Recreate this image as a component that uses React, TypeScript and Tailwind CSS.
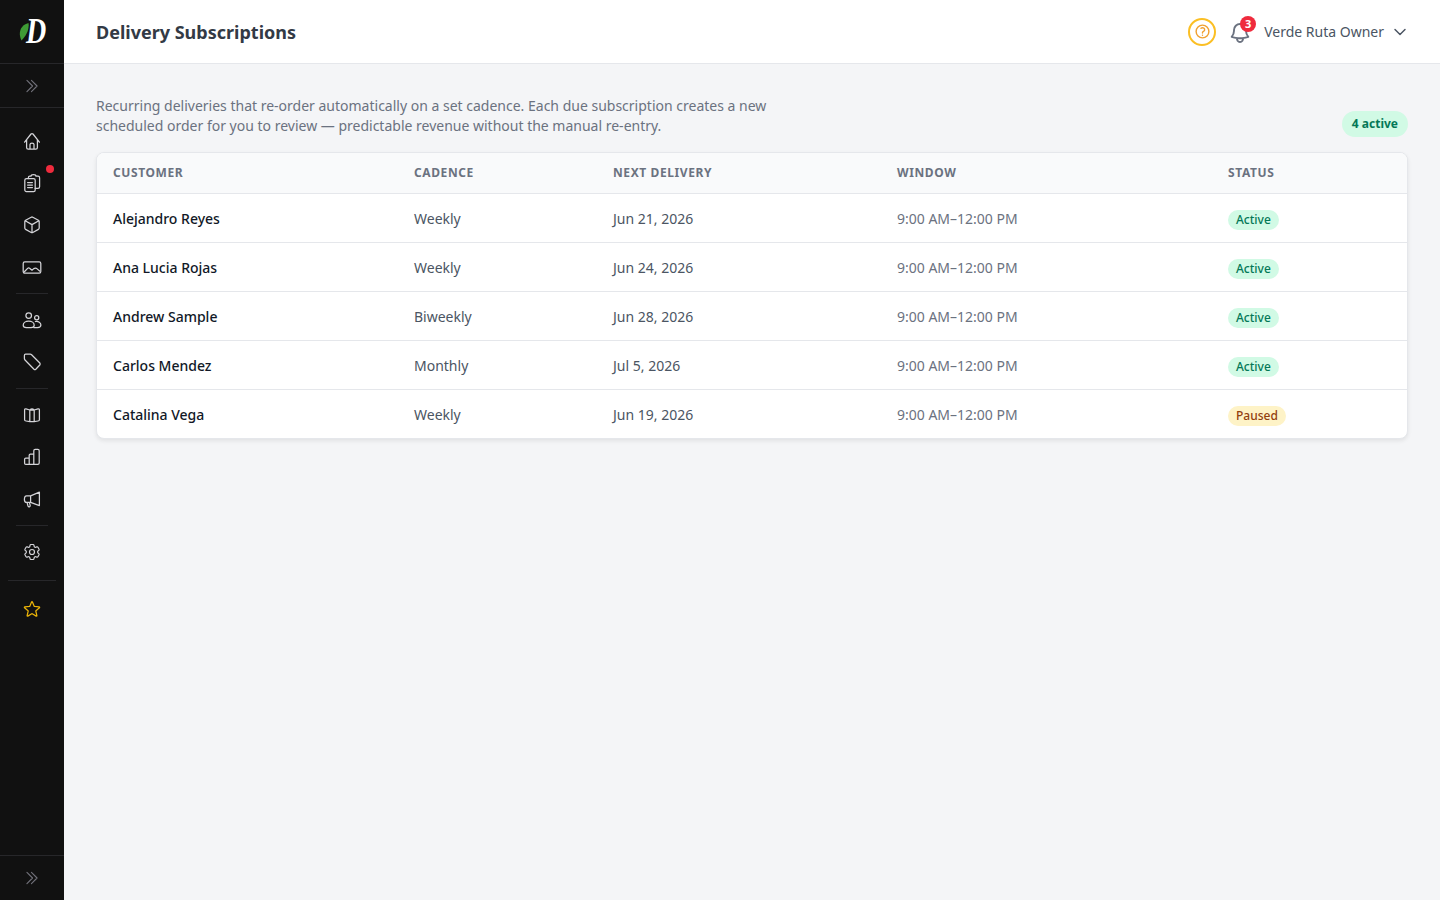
import { HiOutlineCog6Tooth, HiOutlineStar, HiOutlineChevronDoubleRight, HiOutlineBell, HiOutlineChevronDown, HiOutlineQuestionMarkCircle } from "react-icons/hi2";
import type { ReactNode } from "react";

function Ico({ children }: { children: ReactNode }) {
  return (
    <svg viewBox="0 0 20 20" className="h-5 w-5" fill="none" stroke="currentColor" strokeWidth="1.25" strokeLinecap="round" strokeLinejoin="round">
      {children}
    </svg>
  );
}

function NavIcon({ children, dot }: { children: ReactNode; dot?: boolean }) {
  return (
    <div className="relative flex h-[42px] w-16 items-center justify-center text-[#d4d4d8]">
      {children}
      {dot && <span className="absolute right-[10px] top-[3px] h-2 w-2 rounded-full bg-[#ef2b3d]" />}
    </div>
  );
}

function Divider() {
  return <div className="mx-4 my-[5px] h-px bg-[#27272a]" />;
}

const rows = [
  ["Alejandro Reyes", "Weekly", "Jun 21, 2026", "Active"],
  ["Ana Lucia Rojas", "Weekly", "Jun 24, 2026", "Active"],
  ["Andrew Sample", "Biweekly", "Jun 28, 2026", "Active"],
  ["Carlos Mendez", "Monthly", "Jul 5, 2026", "Active"],
  ["Catalina Vega", "Weekly", "Jun 19, 2026", "Paused"],
];

export default function App() {
  return (
    <div className="flex h-[900px] w-[1440px] overflow-hidden bg-[#f4f5f7] font-['Noto_Sans',sans-serif]">
      <aside className="flex h-full w-16 shrink-0 flex-col bg-[#111111]">
        <div className="flex h-16 shrink-0 items-center justify-center border-b border-[#27272a]">
          <div className="relative h-6 w-7">
            <svg viewBox="0 0 28 24" className="absolute inset-0 h-6 w-7">
              <path d="M3.5 20.5 C-0.5 12 3 5 10.5 3 C11.5 9 8.5 16 3.5 20.5Z" fill="#3f9c35" />
            </svg>
            <span className="absolute left-[8px] top-[-6px] origin-left scale-x-[0.8] font-['Liberation_Serif',serif] text-[35px] font-bold italic leading-[36px] text-white">
              D
            </span>
          </div>
        </div>
        <div className="flex h-[44px] shrink-0 items-center justify-center border-b border-[#27272a] text-[#71717a]">
          <HiOutlineChevronDoubleRight size={18} />
        </div>
        <nav className="flex flex-col pt-[12px]">
          <NavIcon>
            <Ico>
              <path d="M2.6 11.2 L9 3 Q10 2 11 3 L17.4 11.2 M4.6 9 V16.4 Q4.6 18 6.2 18 H13.8 Q15.4 18 15.4 16.4 V9 M8 18 V13.6 Q8 12.2 10 12.2 Q12 12.2 12 13.6 V18" />
            </Ico>
          </NavIcon>
          <NavIcon dot>
            <Ico>
              <path d="M6.4 5.6 V4.6 Q6.4 3.2 7.8 3.2 H9 Q9 1.6 11.5 1.6 Q14 1.6 14 3.2 H16 Q17.6 3.2 17.6 4.8 V13.8 Q17.6 15.4 16 15.4 H13.2" />
              <rect x="2.8" y="5.6" width="10.4" height="13" rx="1.6" />
              <path d="M5.6 9.6 H10.4 M5.6 12 H10.4 M5.6 14.6 H10.4" />
            </Ico>
          </NavIcon>
          <NavIcon>
            <Ico>
              <path d="M9.2 2.2 Q10 1.8 10.8 2.2 L16.4 5.2 Q17.2 5.7 17.2 6.5 V13.1 Q17.2 14 16.4 14.4 L10.8 17.5 Q10 17.9 9.2 17.5 L3.6 14.4 Q2.8 14 2.8 13.1 V6.5 Q2.8 5.7 3.6 5.2 Z M3.2 5.7 L10 9.6 L16.8 5.7 M10 9.6 V17.7" />
            </Ico>
          </NavIcon>
          <NavIcon>
            <Ico>
              <rect x="1.2" y="4.8" width="17.6" height="11.4" rx="1.6" />
              <path d="M2.4 14.8 L5.6 11.4 Q6.6 10.4 7.6 11.2 L10 13.2 L11.8 11.6 Q13.4 10.6 14.8 11.6 L17.6 14" />
            </Ico>
          </NavIcon>
          <Divider />
          <NavIcon>
            <Ico>
              <circle cx="6.7" cy="5.6" r="2.8" />
              <circle cx="14.7" cy="7.7" r="2.1" />
              <path d="M1.2 15.2 C1.2 12.8 3.8 11.2 6.7 11.2 C9.6 11.2 12.2 12.8 12.2 15.2 C12.2 17 11 17.6 9 17.6 H4.4 C2.4 17.6 1.2 17 1.2 15.2Z" />
              <path d="M13.4 11.5 C16.4 11 18.9 12.6 18.9 15 C18.9 16.8 17.6 17.5 15.5 17.5 H11.8" />
            </Ico>
          </NavIcon>
          <NavIcon>
            <Ico>
              <path d="M3.6 2.2 H8.2 Q9 2.2 9.6 2.8 L17.8 11 Q18.6 12 17.8 13 L13.8 17.2 Q12.9 18 12 17.2 L3 8 Q2.4 7.4 2.4 6.6 V3.4 Q2.4 2.2 3.6 2.2Z" />
            </Ico>
          </NavIcon>
          <Divider />
          <NavIcon>
            <Ico>
              <path d="M2.6 5 Q2.6 3.6 4 3.9 L7.8 5 L12.2 5 L16 3.9 Q17.4 3.6 17.4 5 V14.8 Q17.4 15.8 16 16 L12.2 16.6 L7.8 16.6 L4 16 Q2.6 15.8 2.6 14.8 Z M7.8 5 V16.6 M12.2 5 V16.6 M7.8 5 Q10 3 12.2 5" />
            </Ico>
          </NavIcon>
          <NavIcon>
            <Ico>
              <path d="M7.2 17.4 H3.8 Q2.6 17.4 2.6 16.2 V12.2 Q2.6 11 3.8 11 H7.2 M7.2 17.4 V8.2 Q7.2 7 8.4 7 H11.8 V17.4 Z M11.8 17.4 H15.8 Q17.2 17.4 17.2 16 V3.8 Q17.2 2.4 15.8 2.4 H13.2 Q11.8 2.4 11.8 3.8 V7" />
            </Ico>
          </NavIcon>
          <NavIcon>
            <Ico>
              <path d="M17.4 3.2 V16.6 L8.6 13.4 H4.6 Q2.4 13.4 2.4 10.4 Q2.4 6.8 4.6 6.8 H8.6 Z M8.6 6.8 V13.4 M5 13.4 L6 17 Q6.4 18 7.4 17.8 Q8.4 17.4 8.2 16.4 L7.4 13.6" />
            </Ico>
          </NavIcon>
          <Divider />
          <NavIcon>
            <HiOutlineCog6Tooth size={20} style={{ strokeWidth: 1.4 }} />
          </NavIcon>
          <div className="mx-2 mt-[7px] h-px bg-[#27272a]" />
          <div className="mt-[7px] flex h-[42px] items-center justify-center text-[#eab308]">
            <HiOutlineStar size={20} />
          </div>
        </nav>
        <div className="mt-auto flex h-[45px] shrink-0 items-center justify-center border-t border-[#27272a] text-[#71717a]">
          <HiOutlineChevronDoubleRight size={18} />
        </div>
      </aside>

      <div className="flex min-w-0 flex-1 flex-col">
        <header className="flex h-16 shrink-0 items-center justify-between border-b border-[#e5e7eb] bg-white px-8">
          <h1 className="text-lg font-bold text-[#333a45]">Delivery Subscriptions</h1>
          <div className="flex items-center">
            <div className="flex h-7 w-7 items-center justify-center rounded-full border-2 border-[#fbbf24] text-[#f0a030]">
              <HiOutlineQuestionMarkCircle size={17} style={{ strokeWidth: 2 }} />
            </div>
            <div className="relative ml-3 flex h-6 w-6 items-center justify-center text-[#6b7280]">
              <HiOutlineBell size={24} className="translate-y-px" style={{ strokeWidth: 1.9 }} />
              <span className="absolute right-[-4px] top-[-4px] flex h-4 w-4 items-center justify-center rounded-full bg-[#ef2b3d] text-[11px] font-bold leading-none text-white">
                3
              </span>
            </div>
            <span className="ml-3 text-sm text-[#4b5563]">Verde Ruta Owner</span>
            <HiOutlineChevronDown size={16} className="ml-2 text-[#4b5563]" style={{ strokeWidth: 2.2 }} />
          </div>
        </header>

        <main className="flex-1 px-8 pt-8">
          <div className="mb-4 flex items-end justify-between">
            <p className="w-[680px] text-sm leading-5 text-[#6b7280]">
              Recurring deliveries that re-order automatically on a set cadence. Each due subscription creates a new
              scheduled order for you to review — predictable revenue without the manual re-entry.
            </p>
            <span className="relative top-px rounded-full bg-[#d1fae5] px-[10px] py-[3px] text-xs font-bold leading-5 text-[#047857]">
              4 active
            </span>
          </div>
          <div className="overflow-hidden rounded-lg border border-[#e5e7eb] bg-white shadow-[0_2px_4px_rgba(0,0,0,0.08)]">
            <table className="w-full table-fixed border-collapse text-left">
              <thead>
                <tr className="h-10 border-b border-[#e5e7eb] bg-[#f9fafb] text-xs tracking-[0.6px] text-[#6b7280]">
                  <th className="w-[301px] pl-4 font-bold">CUSTOMER</th>
                  <th className="w-[199px] pl-4 font-bold">CADENCE</th>
                  <th className="w-[284px] pl-4 font-bold">NEXT DELIVERY</th>
                  <th className="w-[331px] pl-4 font-bold">WINDOW</th>
                  <th className="pl-4 font-bold">STATUS</th>
                </tr>
              </thead>
              <tbody className="text-sm">
                {rows.map((r, i) => (
                  <tr key={r[0]} className={`h-[49px] ${i < rows.length - 1 ? "border-b border-[#e5e7eb]" : ""}`}>
                    <td className="pl-4 pt-[2px] font-medium text-[#111827]">{r[0]}</td>
                    <td className="pl-4 pt-[2px] text-[#4b5563]">{r[1]}</td>
                    <td className="pl-4 pt-[2px] text-[#4b5563]">{r[2]}</td>
                    <td className="pl-4 pt-[2px] text-[#6b7280]">9:00 AM–12:00 PM</td>
                    <td className="pl-4 pt-[4px]">
                      <span
                        className={`inline-block rounded-full px-2 py-px text-xs font-medium leading-[18px] ${
                          r[3] === "Active" ? "bg-[#d1fae5] text-[#047857]" : "bg-[#fef3c7] text-[#92400e]"
                        }`}
                      >
                        {r[3]}
                      </span>
                    </td>
                  </tr>
                ))}
              </tbody>
            </table>
          </div>
        </main>
      </div>
    </div>
  );
}
